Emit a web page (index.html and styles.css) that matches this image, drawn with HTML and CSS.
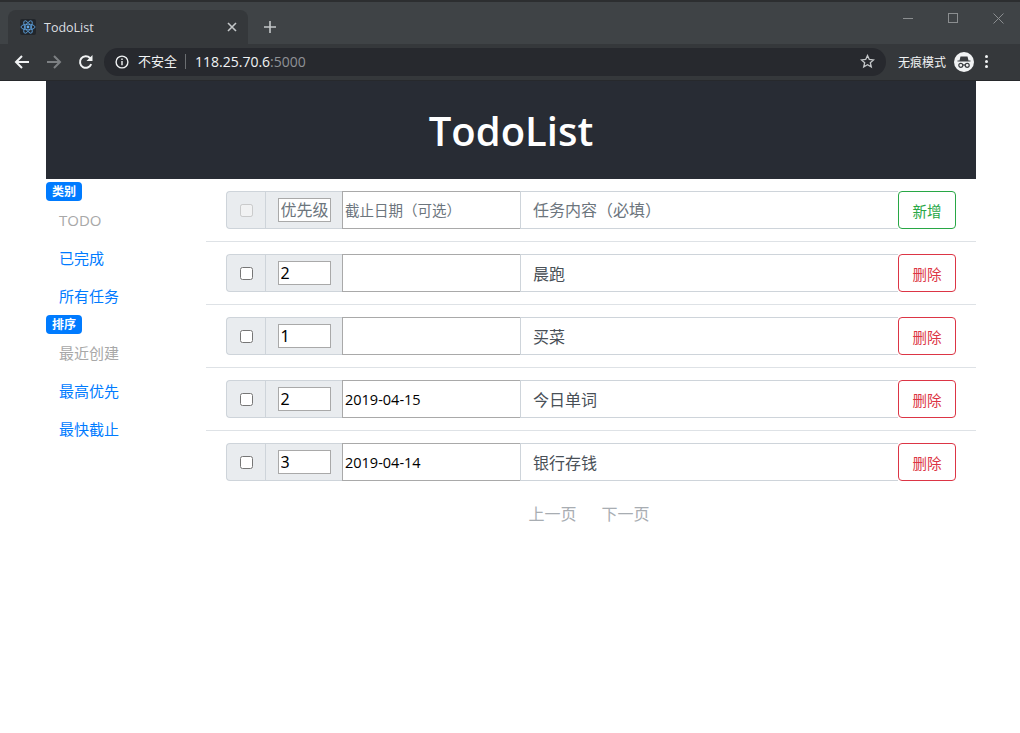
FILE: index.html
```html
<!DOCTYPE html>
<html lang="zh-CN">

<head>
    <meta charset="UTF-8">
    <meta name="viewport" content="width=device-width, initial-scale=1.0">
    <title>TodoList</title>
    <link rel="stylesheet" href="styles.css">
</head>

<body>
    <div class="browser">
        <div class="tab-strip">
            <div class="tab">
                <span class="favicon">
                    <svg width="16" height="16" viewBox="0 0 16 16" fill="none" stroke="#61a8e8" stroke-width="0.8">
                        <ellipse cx="8" cy="8" rx="7" ry="2.8"></ellipse>
                        <ellipse cx="8" cy="8" rx="7" ry="2.8" transform="rotate(60 8 8)"></ellipse>
                        <ellipse cx="8" cy="8" rx="7" ry="2.8" transform="rotate(120 8 8)"></ellipse>
                        <circle cx="8" cy="8" r="1.4" fill="#61a8e8" stroke="none"></circle>
                    </svg>
                </span>
                <span class="tab-title">TodoList</span>
                <svg class="tab-close" width="10" height="10" viewBox="0 0 10 10" stroke="#c4c7c9" stroke-width="1.6">
                    <path d="M1 1l8 8M9 1l-8 8"></path>
                </svg>
            </div>
            <svg class="new-tab" width="14" height="14" viewBox="0 0 14 14" stroke="#c4c7c9" stroke-width="1.6">
                <path d="M7 1v12M1 7h12"></path>
            </svg>
            <div class="window-buttons">
                <svg width="10" height="10" viewBox="0 0 10 10" stroke="#8b8e90">
                    <path d="M0 5.5h10"></path>
                </svg>
                <svg width="10" height="10" viewBox="0 0 10 10" fill="none" stroke="#8b8e90">
                    <rect x="0.5" y="0.5" width="9" height="9"></rect>
                </svg>
                <svg width="11" height="11" viewBox="0 0 11 11" stroke="#8b8e90">
                    <path d="M0.5 0.5l10 10M10.5 0.5l-10 10"></path>
                </svg>
            </div>
        </div>
        <div class="toolbar">
            <svg class="nav-icon" width="16" height="16" viewBox="0 0 16 16" fill="none" stroke="#f1f3f4" stroke-width="2">
                <path d="M15 8H2M8 2L2 8l6 6"></path>
            </svg>
            <svg class="nav-icon" width="16" height="16" viewBox="0 0 16 16" fill="none" stroke="#7d8083" stroke-width="2">
                <path d="M1 8h13M8 2l6 6-6 6"></path>
            </svg>
            <svg class="nav-icon" width="16" height="16" viewBox="0 0 16 16" fill="none" stroke="#f1f3f4" stroke-width="2">
                <path d="M13.2 10.2A5.8 5.8 0 1 1 12 4l1.4 1.4"></path>
                <path d="M14.5 1v6h-6" fill="#f1f3f4" stroke="none"></path>
            </svg>
            <div class="omnibox">
                <svg width="14" height="14" viewBox="0 0 14 14" fill="none" stroke="#f1f3f4" stroke-width="1.4">
                    <circle cx="7" cy="7" r="5.9"></circle>
                    <path d="M7 6v4.2M7 3.4v1.5"></path>
                </svg>
                <span class="not-secure">不安全</span>
                <span class="url"><b>118.25.70.6</b>:5000</span>
                <svg class="star" width="15" height="15" viewBox="0 0 15 15" fill="none" stroke="#c4c7c9" stroke-width="1.3">
                    <path d="M7.5 1.5l1.8 4 4.3.4-3.3 2.8 1 4.2-3.8-2.2-3.8 2.2 1-4.2-3.3-2.8 4.3-.4z"></path>
                </svg>
            </div>
            <span class="incognito-label">无痕模式</span>
            <svg class="incognito" width="20" height="20" viewBox="0 0 20 20">
                <circle cx="10" cy="10" r="10" fill="#f1f3f4"></circle>
                <path d="M6.5 4.5h7l1 4h2v1h-13v-1h2z" fill="#3a3d40"></path>
                <g fill="none" stroke="#3a3d40" stroke-width="1.2">
                    <circle cx="6.8" cy="13.3" r="2"></circle>
                    <circle cx="13.2" cy="13.3" r="2"></circle>
                    <path d="M8.8 13h2.4"></path>
                </g>
            </svg>
            <span class="menu-dots"><i></i><i></i><i></i></span>
        </div>
    </div>

    <div class="container">
        <header class="page-header">
            <h1>TodoList</h1>
        </header>
        <div class="content">
            <aside class="sidebar">
                <span class="badge">类别</span>
                <a class="side-link disabled">TODO</a>
                <a class="side-link">已完成</a>
                <a class="side-link">所有任务</a>
                <span class="badge">排序</span>
                <a class="side-link disabled">最近创建</a>
                <a class="side-link">最高优先</a>
                <a class="side-link">最快截止</a>
            </aside>
            <main class="todos">
                <div class="todo-row">
                    <div class="check-cell"><input type="checkbox" disabled></div>
                    <div class="priority-cell"><input class="priority" type="text" placeholder="优先级"></div>
                    <input class="due" type="text" placeholder="截止日期（可选）">
                    <input class="task" type="text" placeholder="任务内容（必填）">
                    <button class="btn btn-add">新增</button>
                </div>
                <div class="todo-row">
                    <div class="check-cell"><input type="checkbox"></div>
                    <div class="priority-cell"><input class="priority" type="text" value="2"></div>
                    <input class="due" type="text">
                    <input class="task" type="text" value="晨跑">
                    <button class="btn btn-del">删除</button>
                </div>
                <div class="todo-row">
                    <div class="check-cell"><input type="checkbox"></div>
                    <div class="priority-cell"><input class="priority" type="text" value="1"></div>
                    <input class="due" type="text">
                    <input class="task" type="text" value="买菜">
                    <button class="btn btn-del">删除</button>
                </div>
                <div class="todo-row">
                    <div class="check-cell"><input type="checkbox"></div>
                    <div class="priority-cell"><input class="priority" type="text" value="2"></div>
                    <input class="due" type="text" value="2019-04-15">
                    <input class="task" type="text" value="今日单词">
                    <button class="btn btn-del">删除</button>
                </div>
                <div class="todo-row">
                    <div class="check-cell"><input type="checkbox"></div>
                    <div class="priority-cell"><input class="priority" type="text" value="3"></div>
                    <input class="due" type="text" value="2019-04-14">
                    <input class="task" type="text" value="银行存钱">
                    <button class="btn btn-del">删除</button>
                </div>
                <div class="pager">
                    <a>上一页</a>
                    <a>下一页</a>
                </div>
            </main>
        </div>
    </div>
</body>

</html>
```

FILE: styles.css
```css
* {
    box-sizing: border-box;
}

body {
    margin: 0;
    background-color: #ffffff;
    color: #495057;
    font-family: "Open Sans", "Noto Sans CJK SC", sans-serif;
    font-size: 16px;
}

input,
button {
    font-family: "Open Sans", "Noto Sans CJK SC", sans-serif;
}

/* browser chrome */
.browser {
    height: 81px;
    background-color: #35383b;
    border-top: 2px solid #2c2e30;
    border-bottom: 1px solid #27292c;
}

.tab-strip {
    display: flex;
    align-items: center;
    height: 42px;
    padding: 8px 0 0 8px;
    background-color: #3f4346;
}

.tab {
    display: flex;
    align-items: center;
    width: 240px;
    height: 34px;
    padding: 0 11px 0 12px;
    background-color: #35383b;
    border-radius: 8px 8px 0 0;
}

.favicon {
    display: flex;
    align-items: center;
    justify-content: center;
    width: 16px;
    height: 16px;
    background-color: #22262b;
    border-radius: 2px;
}

.tab-title {
    flex: 1;
    margin-left: 8px;
    color: #dcdfe1;
    font-family: "Open Sans", sans-serif;
    font-size: 12.5px;
}

.new-tab {
    margin-left: 15px;
}

.window-buttons {
    display: flex;
    align-items: center;
    gap: 35px;
    margin-left: auto;
    margin-right: 16px;
    margin-bottom: 18px;
}

.toolbar {
    display: flex;
    align-items: center;
    height: 36px;
    padding: 0 0 1px 14px;
}

.nav-icon {
    margin-right: 16px;
}

.omnibox {
    display: flex;
    align-items: center;
    width: 782px;
    height: 28px;
    margin-left: -6px;
    padding: 0 11px;
    background-color: #27292e;
    border-radius: 14px;
}

.not-secure {
    margin-left: 9px;
    padding-right: 8px;
    border-right: 1px solid #6b6e71;
    color: #f1f3f4;
    font-size: 13px;
    line-height: 15px;
}

.url {
    margin-left: 9px;
    color: #8f9296;
    font-family: "Open Sans", sans-serif;
    font-size: 14px;
}

.url b {
    color: #f1f3f4;
    font-weight: 400;
}

.star {
    margin-left: auto;
}

.incognito-label {
    margin-left: 12px;
    color: #f1f3f4;
    font-size: 12px;
}

.incognito {
    margin-left: 8px;
}

.menu-dots {
    display: flex;
    flex-direction: column;
    gap: 2px;
    margin-left: 11px;
}

.menu-dots i {
    display: block;
    width: 3px;
    height: 3px;
    background-color: #f1f3f4;
    border-radius: 50%;
}

/* page */
.container {
    width: 930px;
    margin-left: 46px;
}

.page-header {
    display: flex;
    align-items: center;
    justify-content: center;
    height: 98px;
    background-color: #282c34;
}

.page-header h1 {
    margin: 0;
    color: #ffffff;
    font-size: 40px;
    font-weight: 600;
}

.content {
    display: flex;
}

.sidebar {
    display: flex;
    flex-direction: column;
    align-items: flex-start;
    width: 160px;
    padding-top: 3px;
}

.badge {
    width: 36px;
    height: 19px;
    background-color: #007bff;
    border-radius: 4px;
    color: #ffffff;
    font-size: 12px;
    font-weight: 700;
    line-height: 19px;
    text-align: center;
}

.side-link {
    height: 38px;
    padding-left: 13px;
    color: #007bff;
    font-size: 15px;
    line-height: 38px;
}

.side-link.disabled {
    color: #a8a8a8;
}

.todos {
    flex: 1;
}

.todo-row {
    display: flex;
    height: 63px;
    padding: 12px 20px;
    border-bottom: 1px solid #dee2e6;
}

.todo-row:nth-last-child(2) {
    border-bottom: none;
}

.check-cell,
.priority-cell {
    display: flex;
    align-items: center;
    height: 38px;
    background-color: #e9ecef;
    border: 1px solid #ced4da;
}

.check-cell {
    justify-content: center;
    width: 39px;
    border-right: none;
    border-radius: 4px 0 0 4px;
}

.check-cell input {
    width: 13px;
    height: 13px;
    margin: 0;
}

.priority-cell {
    justify-content: center;
    width: 77px;
    border-right: none;
}

.priority {
    width: 53px;
    height: 24px;
    padding: 1px 2px;
    background-color: #ffffff;
    border: 1px solid #a9a9a9;
    color: #000000;
    font-size: 16px;
    font-family: "Noto Sans", "Noto Sans CJK SC", sans-serif;
}

.due {
    width: 178px;
    height: 38px;
    padding: 1px 2px;
    background-color: #ffffff;
    border: 1px solid #a9a9a9;
    border-right: none;
    color: #000000;
    font-size: 14.5px;
}

.task {
    width: 378px;
    height: 38px;
    padding: 6px 12px;
    background-color: #ffffff;
    border: 1px solid #ced4da;
    border-right: none;
    color: #495057;
    font-size: 16px;
}

.priority::placeholder,
.due::placeholder,
.task::placeholder {
    color: #6c757d;
    opacity: 1;
}

.btn {
    width: 58px;
    height: 38px;
    padding: 0;
    background-color: transparent;
    border: 1px solid;
    border-radius: 4px;
    font-size: 14.5px;
}

.btn-add {
    border-color: #28a745;
    color: #28a745;
}

.btn-del {
    border-color: #dc3545;
    color: #dc3545;
}

.pager {
    display: flex;
    justify-content: center;
    gap: 25px;
    padding-top: 7px;
    padding-right: 4px;
    color: #a8adb2;
    font-size: 16px;
}
```
